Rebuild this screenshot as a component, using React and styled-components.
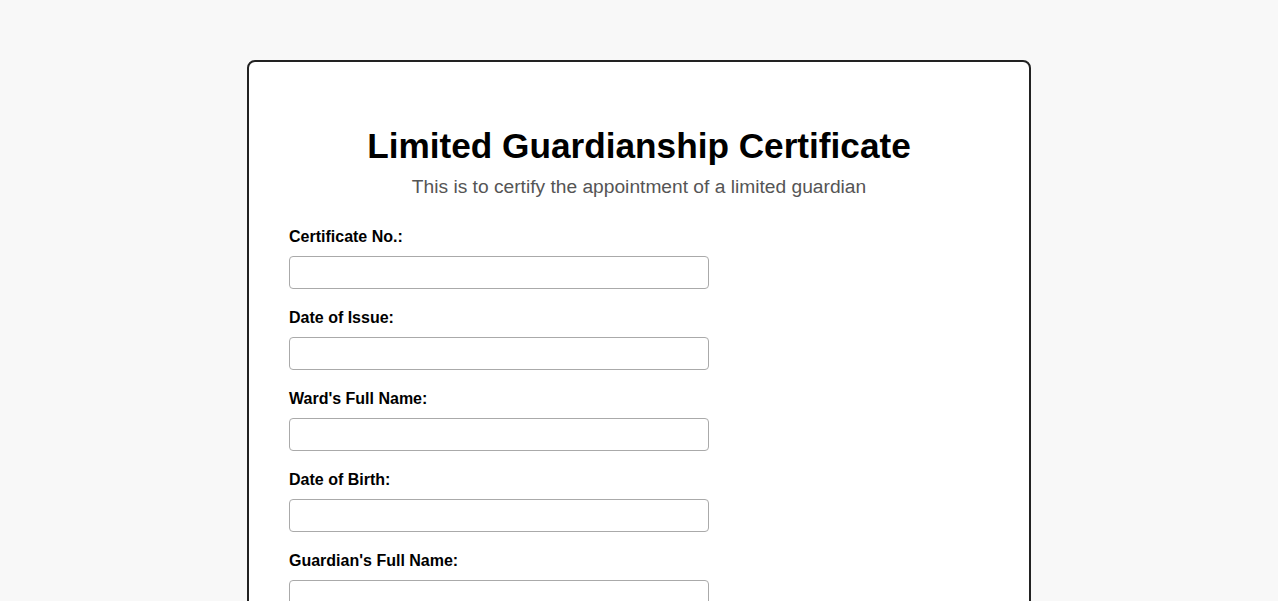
import React from "react";
import styled, { createGlobalStyle } from "styled-components";

const Global = createGlobalStyle`
  body {
    margin: 0;
    background: #f8f8f8;
    font-family: "Liberation Sans", Arial, sans-serif;
  }
`;

const Page = styled.div`
  padding: 60px 20px;
  display: flex;
  justify-content: center;
`;

const Card = styled.div`
  box-sizing: border-box;
  width: 784px;
  background: #fff;
  border: 2px solid #222;
  border-radius: 8px;
  padding: 40px;
`;

const Title = styled.h1`
  text-align: center;
  font-size: 35.2px;
  font-weight: bold;
  color: #000;
  margin: 24px 0 10px;
`;

const Subtitle = styled.p`
  text-align: center;
  font-size: 19.2px;
  color: #555;
  margin: 0 0 30px;
`;

const Field = styled.div`
  display: flex;
  flex-direction: column;
  align-items: flex-start;
  margin-bottom: 20px;
`;

const Label = styled.label`
  font-size: 16px;
  font-weight: bold;
  color: #000;
  margin-bottom: 10px;
`;

const Input = styled.input`
  box-sizing: border-box;
  width: 420px;
  height: 33px;
  border: 1px solid #aaa;
  border-radius: 4px;
  padding: 6px 8px;
  font-family: inherit;
  font-size: 16px;
  background: #fff;
`;

const fields = [
  "Certificate No.:",
  "Date of Issue:",
  "Ward's Full Name:",
  "Date of Birth:",
  "Guardian's Full Name:",
  "Relationship to Ward:",
];

export default function App() {
  return (
    <>
      <Global />
      <Page>
        <Card>
          <Title>Limited Guardianship Certificate</Title>
          <Subtitle>This is to certify the appointment of a limited guardian</Subtitle>
          {fields.map((f) => (
            <Field key={f}>
              <Label>{f}</Label>
              <Input type="text" />
            </Field>
          ))}
        </Card>
      </Page>
    </>
  );
}
